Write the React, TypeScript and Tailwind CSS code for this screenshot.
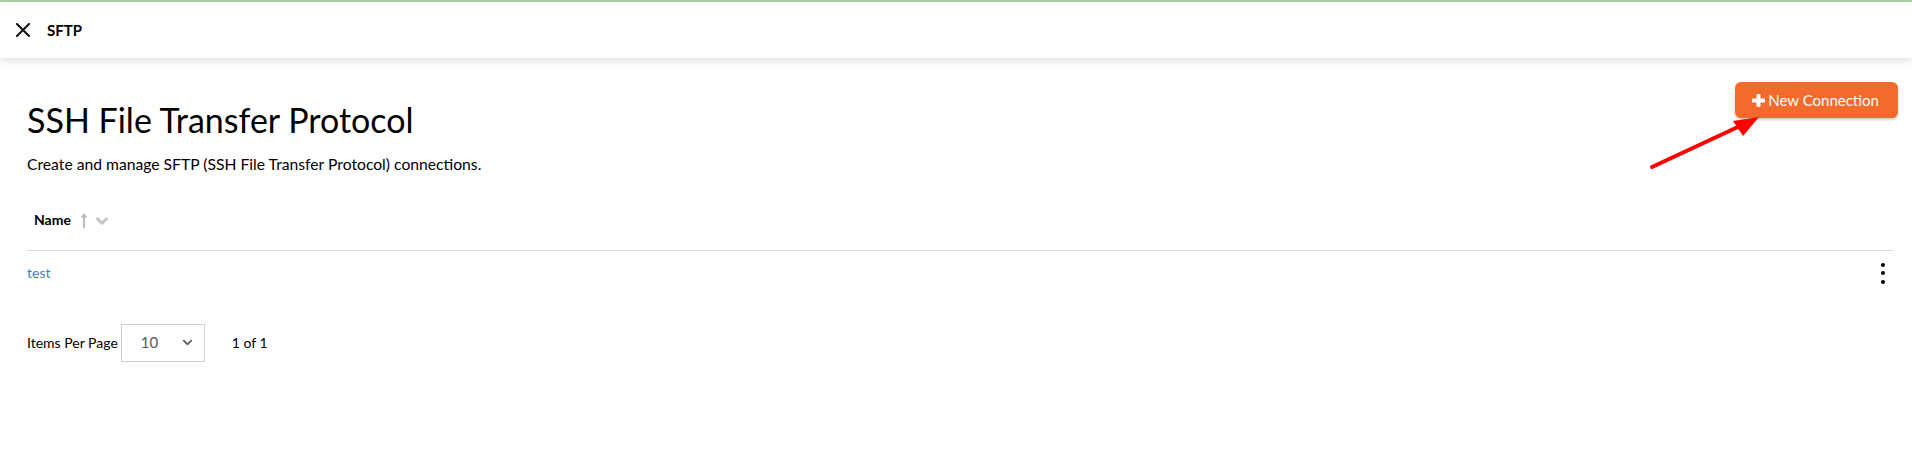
import { ChevronDown } from "lucide-react";

function Kebab() {
  return (
    <div className="flex flex-col items-center gap-[4.5px] pr-[8px]">
      <span className="block h-[4px] w-[4px] rounded-full bg-black" />
      <span className="block h-[4px] w-[4px] rounded-full bg-black" />
      <span className="block h-[4px] w-[4px] rounded-full bg-black" />
    </div>
  );
}

export default function App() {
  return (
    <div className="relative min-h-[474px] bg-white font-['Lato','Liberation_Sans',sans-serif] text-black">
      {/* top accent */}
      <div className="h-[2px] bg-[#a9cfa2]" />

      {/* Header bar */}
      <header className="relative z-10 flex h-[56px] items-center bg-white pl-[16px] shadow-[0_3px_8px_rgba(0,0,0,0.12)]">
        <svg width="14" height="14" viewBox="0 0 14 14" className="shrink-0">
          <path d="M1 1 L13 13 M13 1 L1 13" stroke="#111" strokeWidth="2" strokeLinecap="square" />
        </svg>
        <span className="ml-[17px] text-[15px] font-bold">SFTP</span>
      </header>

      <main className="pl-[27px] pr-[14px] pt-6">
        {/* Title row */}
        <div className="flex items-start justify-between">
          <div className="mt-[18px]">
            <h1 className="text-[34px] leading-[1.2] font-normal">SSH File Transfer Protocol</h1>
            <p className="mt-[14px] text-[15.7px] leading-[1.2]">
              Create and manage SFTP (SSH File Transfer Protocol) connections.
            </p>
          </div>
          <button className="flex h-[36px] items-center rounded-[6px] bg-[#f36b2c] pl-[17px] pr-[19px] text-[15px] text-white shadow-[0_2px_3px_rgba(0,0,0,0.2)]">
            <svg width="13" height="13" viewBox="0 0 13 13" className="mr-[3px]">
              <rect x="4.5" y="0" width="4" height="13" rx="1" fill="white" />
              <rect x="0" y="4.5" width="13" height="4" rx="1" fill="white" />
            </svg>
            New Connection
          </button>
        </div>

        {/* Table */}
        <div className="mr-[5px] mt-[38px]">
          <div className="flex items-center border-b border-[#dcdcdc] pb-[20px] pl-[7px]">
            <span className="text-[14px] leading-[1.2] font-bold">Name</span>
            <svg width="6" height="16" viewBox="0 0 6 16" className="ml-[10px]">
              <path d="M3 15 V2 M0.8 4.5 L3 1.5 L5.2 4.5" stroke="#bdbdbd" strokeWidth="2" fill="none" strokeLinejoin="round" />
            </svg>
            <ChevronDown size={18} strokeWidth={4} className="ml-[6px] text-[#c4c4c4]" />
          </div>
          <div className="flex items-center justify-between pt-[12px]">
            <a className="text-[14px] leading-[1.2] text-[#3b7fc4]">test</a>
            <Kebab />
          </div>
        </div>

        {/* Pagination */}
        <div className="mt-[40px] flex items-center text-[14px]">
          <span>Items Per Page</span>
          <div className="ml-[3px] flex h-[38px] w-[84px] items-center justify-between border border-[#cfcfcf] pl-[19px] pr-[9px]">
            <span className="text-[15px] text-[#555]">10</span>
            <ChevronDown size={15} strokeWidth={2.5} className="text-[#555]" />
          </div>
          <span className="ml-[27px]">1 of 1</span>
        </div>
      </main>

      {/* annotation arrow */}
      <svg
        className="pointer-events-none absolute left-[1640px] top-[105px]"
        width="130"
        height="70"
        viewBox="0 0 130 70"
      >
        <line x1="12" y1="62" x2="100" y2="21" stroke="#ff0000" strokeWidth="4" strokeLinecap="round" />
        <polygon points="119,12 93,16 103,31" fill="#ff0000" />
      </svg>
    </div>
  );
}
